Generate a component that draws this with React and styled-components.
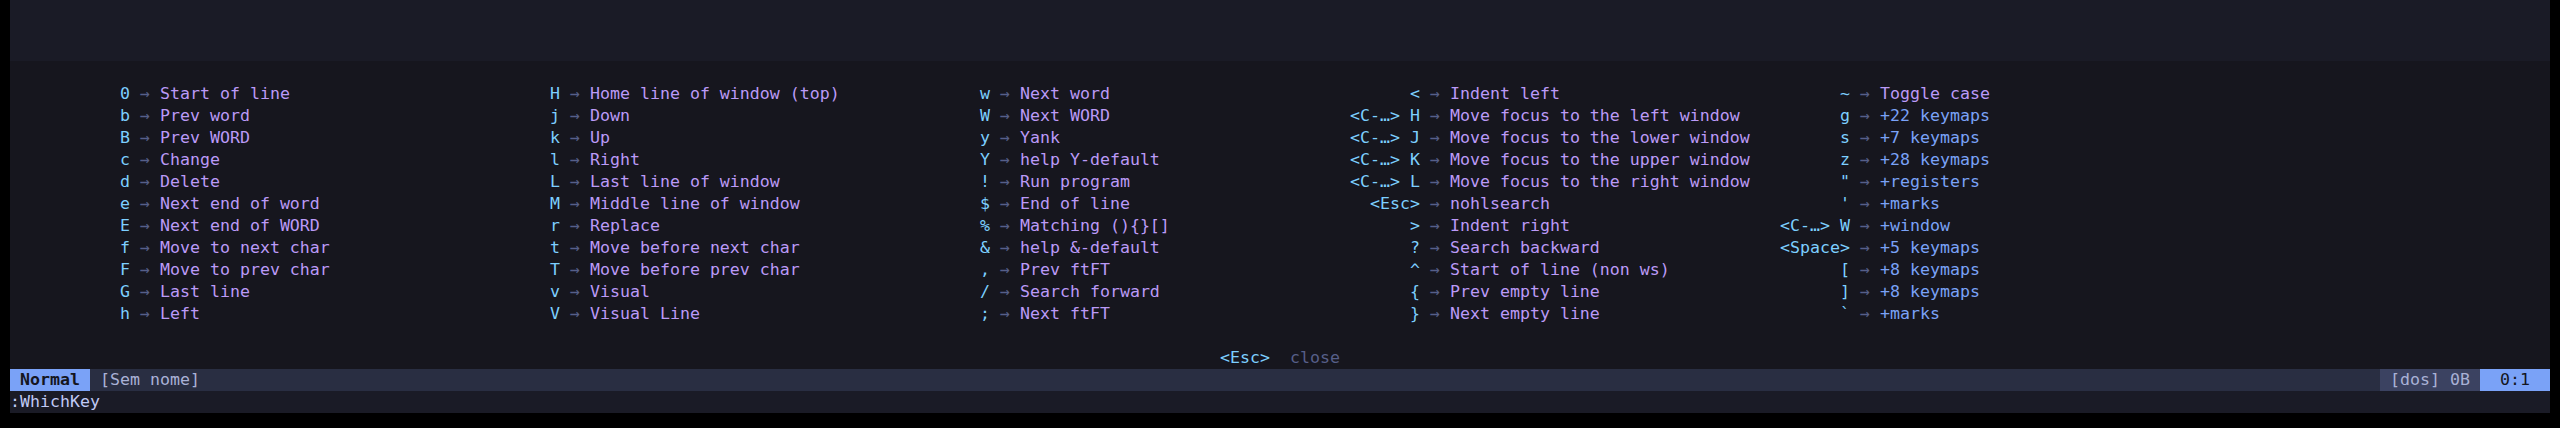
import styled, { createGlobalStyle } from "styled-components";

const GlobalStyle = createGlobalStyle`
    html, body {
        margin: 0;
        padding: 0;
        background: #000000;
    }
`;

const columns = [
    {
        width: 430,
        keyWidth: 10,
        items: [
            ["0", "Start of line"],
            ["b", "Prev word"],
            ["B", "Prev WORD"],
            ["c", "Change"],
            ["d", "Delete"],
            ["e", "Next end of word"],
            ["E", "Next end of WORD"],
            ["f", "Move to next char"],
            ["F", "Move to prev char"],
            ["G", "Last line"],
            ["h", "Left"],
        ],
    },
    {
        width: 430,
        keyWidth: 10,
        items: [
            ["H", "Home line of window (top)"],
            ["j", "Down"],
            ["k", "Up"],
            ["l", "Right"],
            ["L", "Last line of window"],
            ["M", "Middle line of window"],
            ["r", "Replace"],
            ["t", "Move before next char"],
            ["T", "Move before prev char"],
            ["v", "Visual"],
            ["V", "Visual Line"],
        ],
    },
    {
        width: 370,
        keyWidth: 10,
        items: [
            ["w", "Next word"],
            ["W", "Next WORD"],
            ["y", "Yank"],
            ["Y", "help Y-default"],
            ["!", "Run program"],
            ["$", "End of line"],
            ["%", "Matching (){}[]"],
            ["&", "help &-default"],
            [",", "Prev ftFT"],
            ["/", "Search forward"],
            [";", "Next ftFT"],
        ],
    },
    {
        width: 430,
        keyWidth: 70,
        items: [
            ["<", "Indent left"],
            ["<C-…> H", "Move focus to the left window"],
            ["<C-…> J", "Move focus to the lower window"],
            ["<C-…> K", "Move focus to the upper window"],
            ["<C-…> L", "Move focus to the right window"],
            ["<Esc>", "nohlsearch"],
            [">", "Indent right"],
            ["?", "Search backward"],
            ["^", "Start of line (non ws)"],
            ["{", "Prev empty line"],
            ["}", "Next empty line"],
        ],
    },
    {
        width: 400,
        keyWidth: 70,
        items: [
            ["~", "Toggle case"],
            ["g", "+22 keymaps", true],
            ["s", "+7 keymaps", true],
            ["z", "+28 keymaps", true],
            ['"', "+registers", true],
            ["'", "+marks", true],
            ["<C-…> W", "+window", true],
            ["<Space>", "+5 keymaps", true],
            ["[", "+8 keymaps", true],
            ["]", "+8 keymaps", true],
            ["`", "+marks", true],
        ],
    },
];

const App = () => {
    return (
        <Screen>
            <GlobalStyle />
            <Terminal>
                <Buffer />
                <WhichKey>
                    <Columns>
                        {columns.map((col, i) => (
                            <Column key={i} $width={col.width}>
                                {col.items.map(([k, desc, group]) => (
                                    <Mapping key={k}>
                                        <Key $width={col.keyWidth}>{k}</Key>
                                        <Sep>→</Sep>
                                        <Desc $group={group}>{desc}</Desc>
                                    </Mapping>
                                ))}
                            </Column>
                        ))}
                    </Columns>
                    <Footer>
                        <Key>{"<Esc>"}</Key>
                        <Hint>close</Hint>
                    </Footer>
                </WhichKey>
                <StatusLine>
                    <Mode>Normal</Mode>
                    <FileName>[Sem nome]</FileName>
                    <Spacer />
                    <FileInfo>[dos] 0B</FileInfo>
                    <Location>0:1</Location>
                </StatusLine>
                <CmdLine>:WhichKey</CmdLine>
            </Terminal>
        </Screen>
    );
};

export default App;

const Screen = styled.div`
    width: 2560px;
    height: 428px;
    box-sizing: border-box;
    padding: 0 10px 15px 10px;
    background: #000000;
    font-family: "DejaVu Sans Mono", "Liberation Mono", monospace;
    font-size: 16.6px;
    line-height: 22px;
    overflow: hidden;
`;
const Terminal = styled.div`
    display: flex;
    flex-direction: column;
    width: 2540px;
`;
const Buffer = styled.div`
    height: 61px;
    background: #1a1b26;
`;
const WhichKey = styled.div`
    height: 308px;
    box-sizing: border-box;
    padding-top: 22px;
    background: #16161e;
    display: flex;
    flex-direction: column;
`;
const Columns = styled.div`
    display: flex;
    padding-left: 110px;
    height: 242px;
`;
const Column = styled.div`
    width: ${(p) => p.$width}px;
    display: flex;
    flex-direction: column;
`;
const Mapping = styled.div`
    display: flex;
    height: 22px;
    white-space: pre;
`;
const Key = styled.span`
    color: #7dcfff;
    white-space: pre;
    ${(p) => (p.$width ? `width: ${p.$width}px; text-align: right;` : "")}
`;
const Sep = styled.span`
    width: 30px;
    text-align: center;
    color: #565f89;
`;
const Desc = styled.span`
    color: ${(p) => (p.$group ? "#7aa2f7" : "#bb9af7")};
`;
const Footer = styled.div`
    margin-top: 22px;
    height: 22px;
    display: flex;
    justify-content: center;
    gap: 20px;
`;
const Hint = styled.span`
    color: #565f89;
`;
const StatusLine = styled.div`
    height: 22px;
    display: flex;
    background: #292e42;
    white-space: pre;
`;
const Mode = styled.div`
    width: 80px;
    text-align: center;
    background: #7aa2f7;
    color: #15161e;
    font-weight: bold;
`;
const FileName = styled.div`
    padding-left: 10px;
    color: #a9b1d6;
`;
const Spacer = styled.div`
    flex: 1;
`;
const FileInfo = styled.div`
    width: 100px;
    text-align: center;
    background: #3b4261;
    color: #a9b1d6;
`;
const Location = styled.div`
    width: 70px;
    text-align: center;
    background: #7aa2f7;
    color: #15161e;
`;
const CmdLine = styled.div`
    height: 22px;
    background: #1a1b26;
    color: #c0caf5;
`;
